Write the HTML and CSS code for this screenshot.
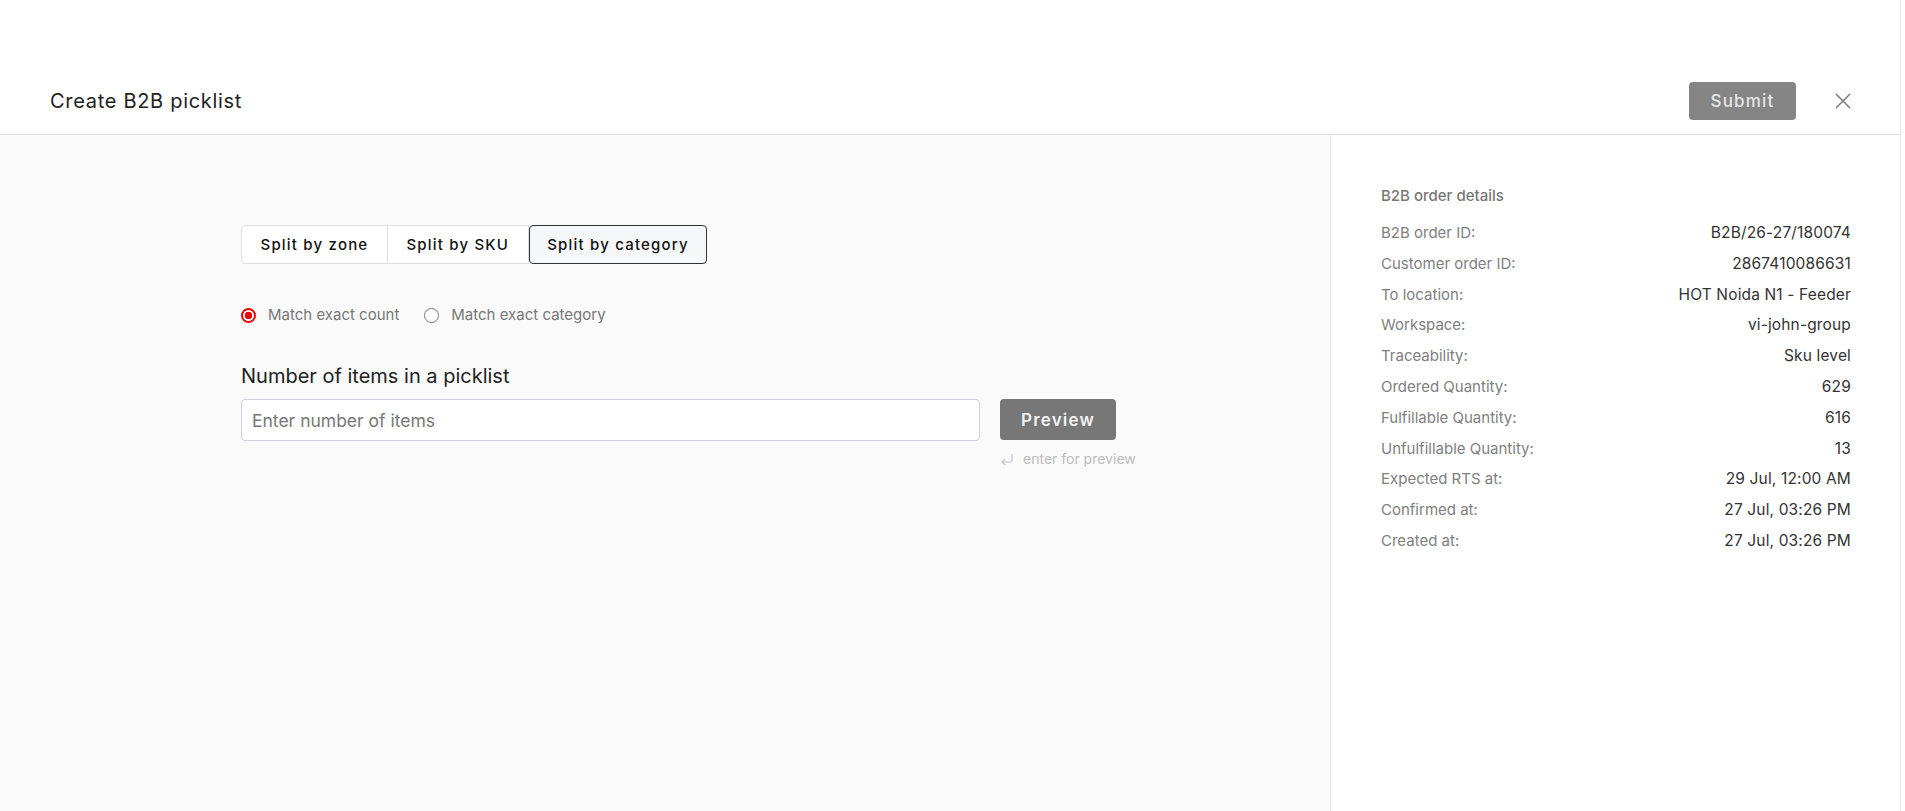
FILE: index.html
```html
<!DOCTYPE html>
<html lang="en">

<head>
  <meta charset="UTF-8">
  <meta name="viewport" content="width=device-width, initial-scale=1.0">
  <title>Create B2B picklist</title>
  <link rel="stylesheet" href="styles.css">
</head>

<body>
  <div class="drawer">
    <header class="drawer-header">
      <h1>Create B2B picklist</h1>
      <div class="header-actions">
        <button class="submit-button" disabled>Submit</button>
        <button class="close-button" title="Close">
          <svg width="16" height="16" viewBox="0 0 16 16">
            <path d="M1 1L15 15M15 1L1 15" stroke="#7a7a7a" stroke-width="1.5" fill="none" />
          </svg>
        </button>
      </div>
    </header>

    <div class="drawer-body">
      <section class="picklist-form">
        <div class="split-tabs">
          <button class="split-tab">Split by zone</button>
          <button class="split-tab">Split by SKU</button>
          <button class="split-tab active">Split by category</button>
        </div>

        <div class="match-options">
          <label class="radio checked"><span class="radio-dot"></span>Match exact count</label>
          <label class="radio"><span class="radio-dot"></span>Match exact category</label>
        </div>

        <label class="field-label" for="itemCount">Number of items in a picklist</label>
        <div class="field-row">
          <input id="itemCount" type="text" placeholder="Enter number of items">
          <div class="preview-col">
            <button class="preview-button">Preview</button>
            <span class="enter-hint">
              <svg width="14" height="14" viewBox="0 0 14 14">
                <path d="M12 2v6.5a1.5 1.5 0 0 1-1.5 1.5H2M5 7l-3 3 3 3" stroke="#c4c4c4" stroke-width="1.2" fill="none" />
              </svg>
              enter for preview
            </span>
          </div>
        </div>
      </section>

      <aside class="order-details">
        <h2>B2B order details</h2>
        <dl class="detail-list">
          <div class="detail-row"><dt>B2B order ID:</dt><dd>B2B/26-27/180074</dd></div>
          <div class="detail-row"><dt>Customer order ID:</dt><dd>2867410086631</dd></div>
          <div class="detail-row"><dt>To location:</dt><dd>HOT Noida N1 - Feeder</dd></div>
          <div class="detail-row"><dt>Workspace:</dt><dd>vi-john-group</dd></div>
          <div class="detail-row"><dt>Traceability:</dt><dd>Sku level</dd></div>
          <div class="detail-row"><dt>Ordered Quantity:</dt><dd>629</dd></div>
          <div class="detail-row"><dt>Fulfillable Quantity:</dt><dd>616</dd></div>
          <div class="detail-row"><dt>Unfulfillable Quantity:</dt><dd>13</dd></div>
          <div class="detail-row"><dt>Expected RTS at:</dt><dd>29 Jul, 12:00 AM</dd></div>
          <div class="detail-row"><dt>Confirmed at:</dt><dd>27 Jul, 03:26 PM</dd></div>
          <div class="detail-row"><dt>Created at:</dt><dd>27 Jul, 03:26 PM</dd></div>
        </dl>
      </aside>
    </div>
  </div>
</body>

</html>
```

FILE: styles.css
```css
html,
body {
  height: 100%;
}

body {
  font-family: Inter, "Noto Sans", sans-serif;
  margin: 0;
  padding: 0;
  background-color: #fff;
  color: #222;
}

.drawer {
  height: 100%;
  margin-right: 4px;
  border-right: 1px solid #e6e6e6;
  display: flex;
  flex-direction: column;
}

/* header */
.drawer-header {
  display: flex;
  align-items: center;
  justify-content: space-between;
  padding: 82px 49px 14px 50px;
  background-color: #fff;
  border-bottom: 1px solid #dcdcdc;
}

.drawer-header h1 {
  margin: 0;
  font-size: 20px;
  font-weight: 400;
  letter-spacing: 0.7px;
  line-height: 38px;
  color: #222;
}

.header-actions {
  display: flex;
  align-items: center;
  gap: 39px;
}

.submit-button {
  width: 107px;
  height: 38px;
  font-family: inherit;
  font-size: 17px;
  font-weight: 500;
  letter-spacing: 1.2px;
  color: #e6e6e6;
  background-color: #858585;
  border: none;
  border-radius: 4px;
}

.close-button {
  padding: 0;
  border: none;
  background: none;
  cursor: pointer;
  display: flex;
}

/* body */
.drawer-body {
  flex: 1;
  display: flex;
}

.picklist-form {
  flex: 1;
  background-color: #fafafa;
  padding: 90px 0 0 241px;
}

.split-tabs {
  display: flex;
}

.split-tab {
  height: 39px;
  padding: 0 18.5px;
  font-family: inherit;
  font-size: 15px;
  font-weight: 500;
  letter-spacing: 1.2px;
  color: #111;
  background-color: #fff;
  border: 1px solid #dedede;
  cursor: pointer;
}

.split-tab:first-child {
  border-radius: 4px 0 0 4px;
}

.split-tab + .split-tab {
  border-left: none;
}

.split-tab.active {
  background-color: #f6f7f9;
  border: 1px solid #333;
  border-radius: 4px;
  padding: 0 17.5px;
}

.match-options {
  display: flex;
  gap: 25px;
  margin-top: 41px;
}

.radio {
  display: flex;
  align-items: center;
  gap: 12px;
  font-size: 15px;
  line-height: 20px;
  color: #777;
}

.radio-dot {
  width: 13px;
  height: 13px;
  border: 1px solid #777;
  border-radius: 50%;
  background-color: #fff;
  box-sizing: content-box;
}

.radio.checked .radio-dot {
  width: 11px;
  height: 11px;
  border: 2px solid #e00;
  background: radial-gradient(circle, #e00 0 3.5px, #fff 4px);
}

.field-label {
  display: block;
  margin-top: 39px;
  font-size: 20px;
  line-height: 24px;
  color: #222;
}

.field-row {
  display: flex;
  gap: 20px;
  margin-top: 11px;
}

.field-row input {
  width: 739px;
  height: 42px;
  box-sizing: border-box;
  padding: 0 10px;
  font-family: inherit;
  font-size: 17.5px;
  color: #222;
  background-color: #fff;
  border: 1px solid #d2d2da;
  border-radius: 4px;
}

.field-row input::placeholder {
  color: #777;
}

.preview-col {
  display: flex;
  flex-direction: column;
}

.preview-button {
  width: 116px;
  height: 41px;
  font-family: inherit;
  font-size: 17px;
  font-weight: 600;
  letter-spacing: 1.2px;
  color: #f2f2f2;
  background-color: #777;
  border: none;
  border-radius: 4px;
}

.enter-hint {
  display: flex;
  align-items: center;
  gap: 9px;
  margin-top: 10px;
  font-size: 14px;
  color: #bdbdbd;
}

/* order details panel */
.order-details {
  width: 470px;
  padding: 51px 49px 0 50px;
  background-color: #fff;
  border-left: 1px solid #e2e2e2;
}

.order-details h2 {
  margin: 0 0 12px;
  font-size: 15px;
  font-weight: 500;
  line-height: 20px;
  color: #777;
}

.detail-list {
  margin: 0;
}

.detail-row {
  display: flex;
  justify-content: space-between;
  font-size: 15px;
  line-height: 30.8px;
}

.detail-row dt {
  color: #808080;
}

.detail-row dd {
  margin: 0;
  font-size: 15.5px;
  letter-spacing: 0.15px;
  color: #333;
}
```
